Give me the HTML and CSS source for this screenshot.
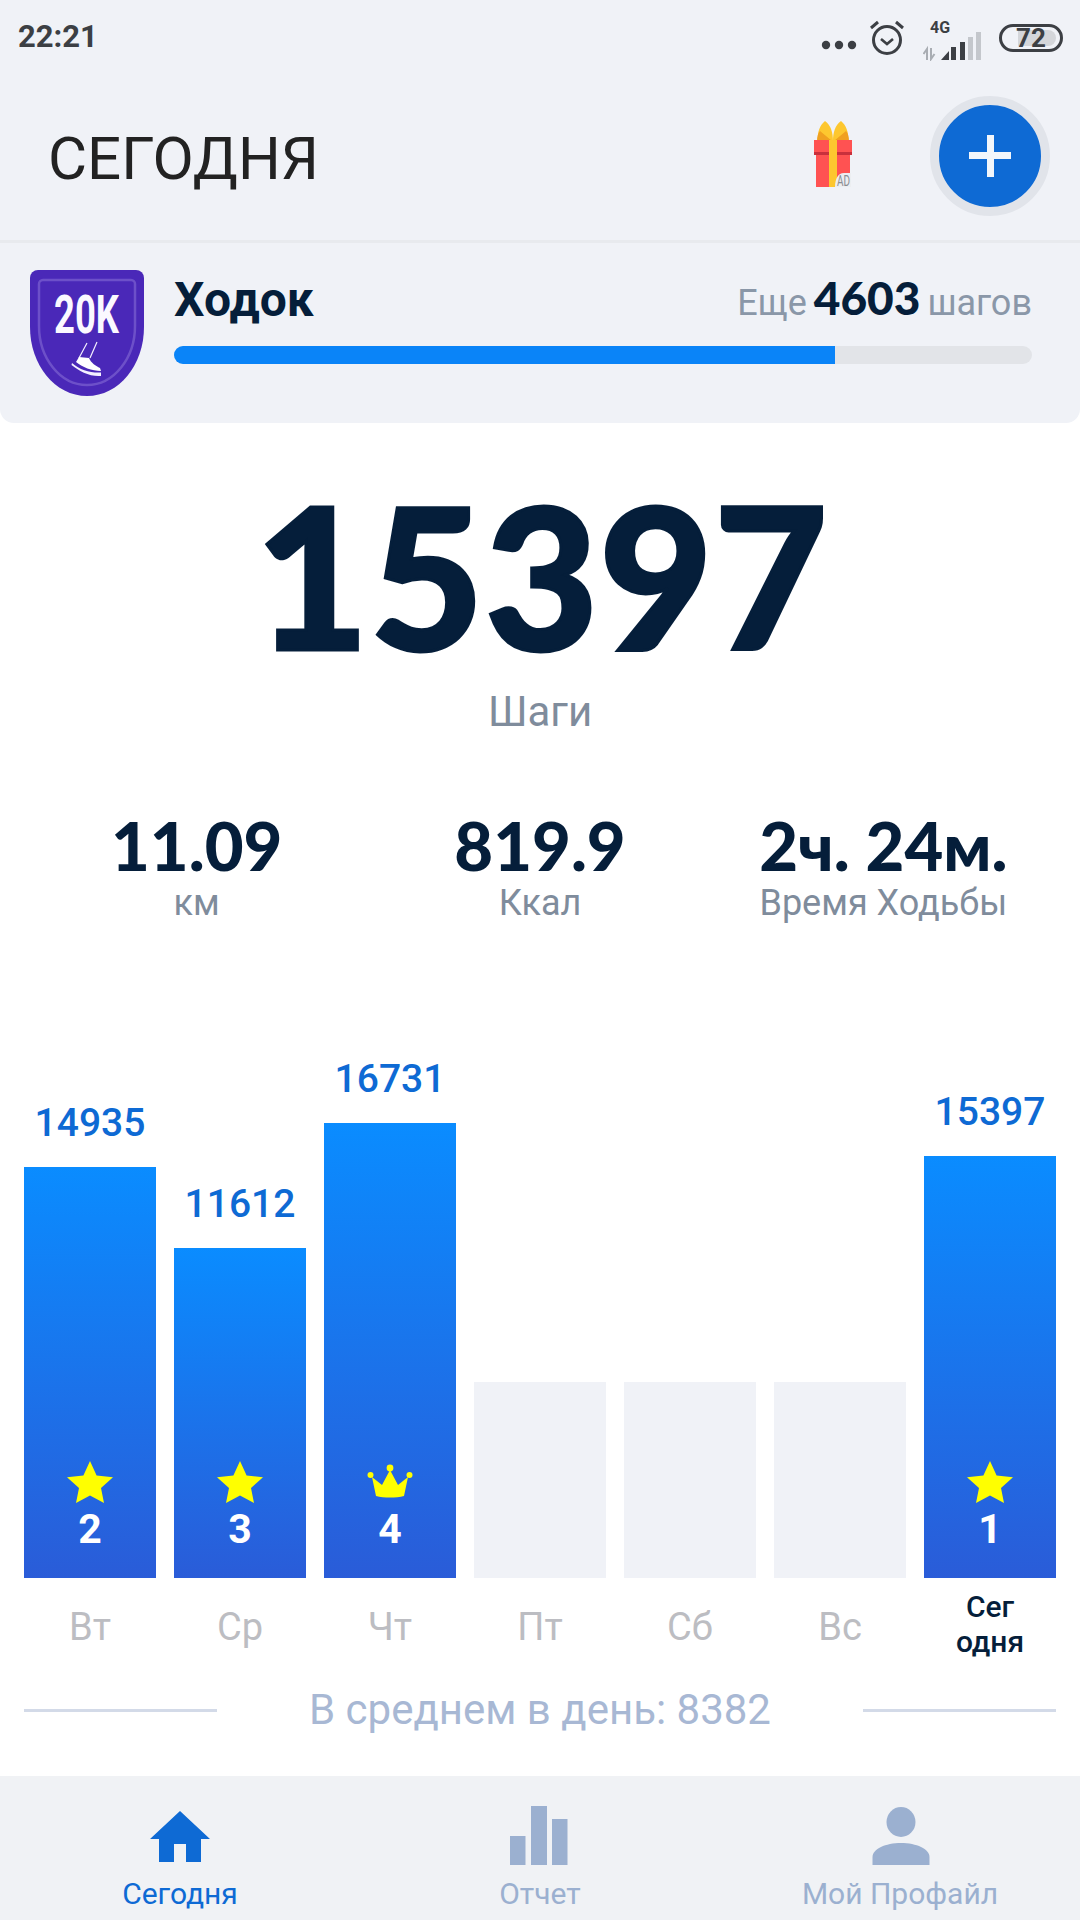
FILE: index.html
```html
<!DOCTYPE html>
<html lang="ru">
<head>
    <meta charset="UTF-8">
    <meta name="viewport" content="width=device-width, initial-scale=1.0">
    <title>Сегодня</title>
    <link rel="stylesheet" href="styles.css">
</head>
<body>
    <div class="top">
        <div class="status-bar">
            <span class="clock">22:21</span>
            <div class="status-icons">
                <svg class="dots" width="36" height="10" viewBox="0 0 36 10"><circle cx="5" cy="5" r="4.2"/><circle cx="18" cy="5" r="4.2"/><circle cx="31" cy="5" r="4.2"/></svg>
                <svg class="alarm" width="36" height="36" viewBox="0 0 36 36" fill="none" stroke="#3c3f44">
                    <circle cx="18" cy="20" r="13.5" stroke-width="3"/>
                    <path d="M12 19l6 5 6-5" stroke-width="2.6"/>
                    <path d="M2 8l7-6M34 8l-7-6" stroke-width="3"/>
                </svg>
                <div class="network">
                    <span class="net-label">4G</span>
                    <svg width="60" height="32" viewBox="0 0 60 32">
                        <path d="M4 31V20l-3.500 5M8 19v11l3.500-5" fill="none" stroke="#a9adb3" stroke-width="2"/>
                        <path d="M18 31l8-9v9zM28 31V18h5v13zM37 31V13h5v18z" fill="#3c3f44"/>
                        <path d="M45 31V8h5v23zM53 31V3h5v28z" fill="#c4c7cc"/>
                    </svg>
                </div>
                <div class="battery"><span class="battery-level"></span><span class="battery-text">72</span></div>
            </div>
        </div>

        <header class="title-bar">
            <h1>СЕГОДНЯ</h1>
            <svg class="gift" width="40" height="68" viewBox="0 0 40 68">
                <path d="M12 1c6 4 8 12 8 20H5C4 12 7 5 12 1zM28 1c-6 4-8 12-8 20h15c1-9-2-16-7-20z" fill="#fdc72f"/>
                <path d="M4 21c0-4 1-8 3-10l12 10zM36 21c0-4-1-8-3-10L21 21z" fill="#f0a020"/>
                <path d="M1 20h38v13H1z" fill="#ff5252"/>
                <path d="M3 33h34v34H3z" fill="#ff5252"/>
                <path d="M1 32h38v3H1z" fill="#c9303c"/>
                <path d="M16 20h8v47h-8z" fill="#fdc72f"/>
                <path d="M22 67c0-8 3-14 9-14h7v14z" fill="#eceef1"/>
                <text x="24" y="66" class="gift-ad" textLength="13" lengthAdjust="spacingAndGlyphs">AD</text>
            </svg>
            <button class="add-btn"><span class="plus"></span></button>
        </header>

        <section class="level">
            <svg class="badge" width="114" height="126" viewBox="0 0 114 126">
                <path d="M8 0h98a8 8 0 0 1 8 8v49c0 38-25 69-57 69S0 95 0 57V8a8 8 0 0 1 8-8z" fill="#4a28b8"/>
                <path d="M13 10h88a4 4 0 0 1 4 4v42c0 32-21 59-48 59S9 88 9 56V14a4 4 0 0 1 4-4z" fill="none" stroke="#6d50c9" stroke-width="2.500"/>
                <text x="24" y="63" class="badge-text" textLength="65" lengthAdjust="spacingAndGlyphs">20K</text>
                <path d="M57 73l-8 15M67 72l-7 16" fill="none" stroke="#f4f0ff" stroke-width="1.200"/>
                <path d="M49 87l10 1c2 5 7 8 11 10l1 3c-9 0-19-4-25-9z" fill="#fff"/>
                <path d="M42 93c8 7 18 10 29 9.500v3.500c-11 1-22-5-29.500-11z" fill="#f4f0ff"/>
            </svg>
            <div class="level-info">
                <div class="level-head">
                    <span class="level-name">Ходок</span>
                    <span class="level-left">Еще <b>4603</b> шагов</span>
                </div>
                <div class="progress"><div class="progress-fill" style="width: 77%"></div></div>
            </div>
        </section>
    </div>

    <main class="today">
        <div class="steps">15397</div>
        <div class="steps-label">Шаги</div>

        <div class="stats">
            <div class="stat"><div class="stat-value">11.09</div><div class="stat-label">км</div></div>
            <div class="stat"><div class="stat-value">819.9</div><div class="stat-label">Ккал</div></div>
            <div class="stat"><div class="stat-value">2ч. 24м.</div><div class="stat-label">Время Ходьбы</div></div>
        </div>

        <div class="chart">
            <div class="col">
                <div class="col-value">14935</div>
                <div class="bar" style="height: 411px">
                    <svg class="star" width="46" height="42" viewBox="0 0 46 42"><path d="M23 0l6.600 14.400L46 16.200 34 27l3 15-14-7.600L9 42l3-15L0 16.200l16.400-1.800z"/></svg>
                    <span class="rank">2</span>
                </div>
            </div>
            <div class="col">
                <div class="col-value">11612</div>
                <div class="bar" style="height: 330px">
                    <svg class="star" width="46" height="42" viewBox="0 0 46 42"><path d="M23 0l6.600 14.400L46 16.200 34 27l3 15-14-7.600L9 42l3-15L0 16.200l16.400-1.800z"/></svg>
                    <span class="rank">3</span>
                </div>
            </div>
            <div class="col">
                <div class="col-value">16731</div>
                <div class="bar" style="height: 455px">
                    <svg class="star" width="46" height="42" viewBox="0 0 46 42"><circle cx="23" cy="7" r="3.400"/><circle cx="3.500" cy="14" r="3"/><circle cx="42.500" cy="14" r="3"/><path d="M23 9l8 15 10-8-4 19c-8 2-20 2-28 0L5 16l10 8z"/></svg>
                    <span class="rank">4</span>
                </div>
            </div>
            <div class="col"><div class="bar bar-empty" style="height: 196px"></div></div>
            <div class="col"><div class="bar bar-empty" style="height: 196px"></div></div>
            <div class="col"><div class="bar bar-empty" style="height: 196px"></div></div>
            <div class="col">
                <div class="col-value">15397</div>
                <div class="bar" style="height: 422px">
                    <svg class="star" width="46" height="42" viewBox="0 0 46 42"><path d="M23 0l6.600 14.400L46 16.200 34 27l3 15-14-7.600L9 42l3-15L0 16.200l16.400-1.800z"/></svg>
                    <span class="rank">1</span>
                </div>
            </div>
        </div>

        <div class="days">
            <span>Вт</span>
            <span>Ср</span>
            <span>Чт</span>
            <span>Пт</span>
            <span>Сб</span>
            <span>Вс</span>
            <span class="day-today">Сег<br>одня</span>
        </div>

        <div class="average">
            <span class="average-line"></span>
            <span class="average-text">В среднем в день: 8382</span>
            <span class="average-line"></span>
        </div>
    </main>

    <nav class="tabs">
        <div class="tab tab-active">
            <svg width="60" height="60" viewBox="0 0 60 60"><path d="M30 5l30 28h-9v23H36V38H24v18H9V33H0z"/></svg>
            <span>Сегодня</span>
        </div>
        <div class="tab">
            <svg width="60" height="60" viewBox="0 0 60 60"><path d="M0 30h15.500v29H0zM21 0h16v59H21zM42 13h15.500v46H42z"/></svg>
            <span>Отчет</span>
        </div>
        <div class="tab">
            <svg width="60" height="60" viewBox="0 0 60 60"><ellipse cx="31" cy="16" rx="14.500" ry="15"/><path d="M2.500 59v-8c0-8 13-14 28.500-14s28.500 6 28.500 14v8z"/></svg>
            <span>Мой Профайл</span>
        </div>
    </nav>
</body>
</html>
```

FILE: styles.css
```css
* {
    box-sizing: border-box;
}
body {
    font-family: Roboto, "Liberation Sans", sans-serif;
    margin: 0;
    width: 1080px;
    height: 1920px;
    overflow: hidden;
    background-color: #fff;
    display: flex;
    flex-direction: column;
}

/* top panel */
.top {
    height: 423px;
    background-color: #f0f2f7;
    border-radius: 0 0 14px 14px;
}
.status-bar {
    height: 76px;
    padding: 0 17px 0 18px;
    display: flex;
    align-items: center;
    justify-content: space-between;
}
.clock {
    font-size: 31px;
    font-weight: 700;
    color: #3c3f44;
    margin-top: -3px;
}
.status-icons {
    display: flex;
    align-items: center;
}
.dots {
    fill: #3c3f44;
    margin: 14px 12px 0 0;
}
.network {
    position: relative;
    margin-left: 18px;
    width: 60px;
    height: 32px;
    margin-top: 14px;
}
.net-label {
    position: absolute;
    top: -11px;
    left: 7px;
    font-size: 16px;
    font-weight: 700;
    color: #3c3f44;
}
.battery {
    position: relative;
    width: 64px;
    height: 28px;
    margin-left: 16px;
    border: 3px solid #3c3f44;
    border-radius: 14px;
    display: flex;
    align-items: center;
    justify-content: center;
}
.battery-level {
    position: absolute;
    top: 3px;
    left: 16px;
    width: 38px;
    height: 16px;
    background-color: #d4d6da;
    border-radius: 0 8px 8px 0;
}
.battery-text {
    position: relative;
    font-size: 26px;
    font-weight: 700;
    color: #3c3f44;
}

.title-bar {
    height: 167px;
    padding: 0 30px 0 48px;
    display: flex;
    align-items: center;
    border-bottom: 3px solid #e8eaee;
}
h1 {
    margin: 0;
    font-size: 60px;
    font-weight: 400;
    color: #222;
    flex: 1;
}
.gift {
    margin-right: 77px;
    margin-top: -8px;
    overflow: visible;
}
.gift-ad {
    font-size: 15px;
    fill: #8a8d92;
    font-family: Roboto, sans-serif;
}
.add-btn {
    width: 120px;
    height: 120px;
    margin-top: -5px;
    padding: 0;
    border: 9px solid #e1e4ea;
    border-radius: 50%;
    background-color: #0e6ad4;
    display: flex;
    align-items: center;
    justify-content: center;
}
.plus {
    position: relative;
    display: block;
    width: 42px;
    height: 7px;
    background-color: #f2f6fb;
}
.plus::after {
    content: "";
    position: absolute;
    top: -17.5px;
    left: 17.5px;
    width: 7px;
    height: 42px;
    background-color: #f2f6fb;
}

.level {
    padding: 27px 48px 0 30px;
    display: flex;
    align-items: flex-start;
    gap: 30px;
}
.badge {
    overflow: visible;
}
.badge-text {
    font-family: Roboto, sans-serif;
    font-size: 53px;
    font-weight: 700;
    fill: #fbf9ff;
}
.level-info {
    flex: 1;
}
.level-head {
    height: 54px;
    margin-bottom: 22px;
    display: flex;
    align-items: center;
    justify-content: space-between;
}
.level-name {
    font-size: 48px;
    font-weight: 700;
    color: #051e3a;
    margin-top: 4px;
}
.level-left {
    font-size: 36px;
    color: #8a97a8;
    word-spacing: -2px;
}
.level-left b {
    font-family: Lato, sans-serif;
    font-size: 46px;
    font-weight: 900;
    color: #051e3a;
}
.progress {
    height: 18px;
    background-color: #e2e4e8;
    border-radius: 9px;
    overflow: hidden;
}
.progress-fill {
    height: 100%;
    background-color: #0a84f8;
}

/* today */
.today {
    flex: 1;
}
.steps {
    margin-top: 54px;
    font-family: Lato, sans-serif;
    font-weight: 900;
    font-size: 196px;
    line-height: 196px;
    letter-spacing: 1px;
    color: #051e3a;
    -webkit-text-stroke: 3px #051e3a;
    text-align: center;
    padding-left: 4px;
}
.steps-label {
    margin-top: 16px;
    font-size: 42px;
    line-height: 46px;
    color: #7f8c9c;
    text-align: center;
}
.stats {
    margin-top: 74px;
    padding: 0 25px;
    display: grid;
    grid-template-columns: repeat(3, 1fr);
    text-align: center;
}
.stat-value {
    font-family: Lato, sans-serif;
    font-weight: 900;
    font-size: 67px;
    line-height: 72px;
    color: #051e3a;
}
.stat-label {
    font-size: 36px;
    line-height: 44px;
    color: #7f8c9c;
}

.chart {
    height: 653px;
    padding: 0 24px;
    display: flex;
    align-items: flex-end;
    gap: 18px;
}
.col {
    width: 132px;
    text-align: center;
}
.col-value {
    font-size: 39px;
    line-height: 44px;
    margin-bottom: 22px;
    font-weight: 500;
    color: #0e6ad4;
}
.bar {
    padding-bottom: 26px;
    background-image: linear-gradient(#0a8cff, #2a5cd8);
    display: flex;
    flex-direction: column;
    justify-content: flex-end;
    align-items: center;
}
.bar-empty {
    background-image: none;
    background-color: #f0f2f7;
}
.star {
    fill: #ffff00;
}
.rank {
    margin-top: 3px;
    font-size: 41px;
    line-height: 46px;
    font-weight: 700;
    color: #fff;
}
.days {
    height: 97px;
    padding: 0 24px;
    display: flex;
    gap: 18px;
    align-items: center;
    font-size: 38px;
    color: #bcbdc2;
}
.days span {
    width: 132px;
    text-align: center;
}
.days .day-today {
    font-size: 30px;
    line-height: 35px;
    font-weight: 500;
    color: #051e3a;
    margin-top: -6px;
}
.average {
    padding: 0 24px;
    margin-top: 12px;
    display: flex;
    align-items: center;
    justify-content: space-between;
}
.average-line {
    width: 193px;
    height: 3px;
    background-color: #d3dae8;
}
.average-text {
    font-size: 42px;
    line-height: 46px;
    color: #a8b8d4;
}

/* bottom tabs */
.tabs {
    height: 144px;
    background-color: #f0f2f5;
    display: grid;
    grid-template-columns: repeat(3, 1fr);
}
.tab {
    padding-top: 30px;
    display: flex;
    flex-direction: column;
    align-items: center;
    font-size: 30px;
    line-height: 36px;
    color: #9bb0d0;
}
.tab svg {
    fill: #9bb0d0;
}
.tab span {
    margin-top: 10px;
}
.tab-active {
    color: #0e6ad4;
}
.tab-active svg {
    fill: #0e6ad4;
}
```
